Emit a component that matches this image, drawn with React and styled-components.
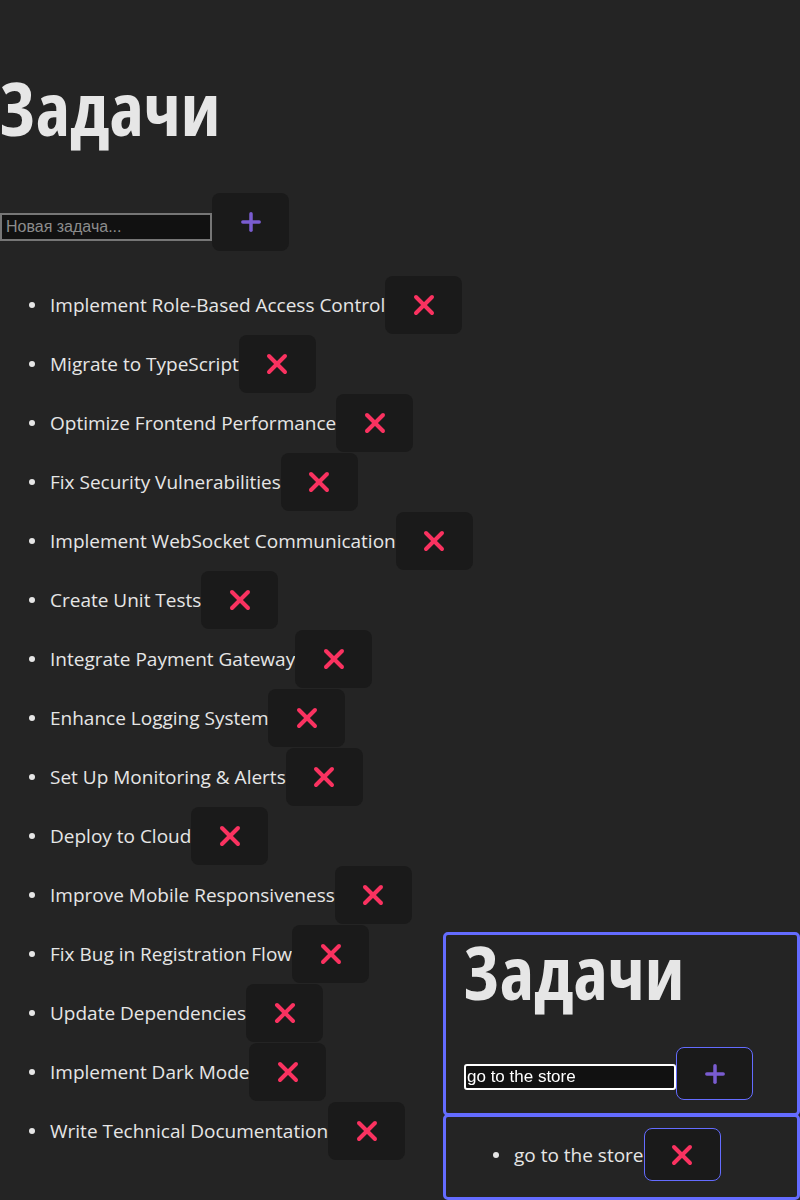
import React from 'react';
import styled, { createGlobalStyle } from 'styled-components';
import { Plus, X } from 'lucide-react';

const GlobalStyle = createGlobalStyle`
  html, body {
    margin: 0;
    padding: 0;
    background: #242424;
    color: rgba(255, 255, 255, 0.87);
    font-family: "Open Sans", "Noto Sans", sans-serif;
  }
`;

const Page = styled.div`
  box-sizing: border-box;
  height: 1200px;
  overflow: hidden;
  padding-top: 67px;
`;

const Title = styled.h1`
  margin: 0;
  font-family: "Open Sans", sans-serif;
  font-stretch: 80%;
  font-size: 74px;
  line-height: 1.1;
  font-weight: 700;
  color: #e6e6e6;
`;

const AddRow = styled.div`
  display: flex;
  align-items: flex-start;
  margin-top: ${p => p.$top}px;
`;

const TaskInput = styled.input`
  box-sizing: border-box;
  width: 212px;
  height: ${p => (p.$focused ? 26 : 28)}px;
  margin-top: ${p => p.$offset}px;
  padding: 1px ${p => (p.$focused ? 1 : 4)}px;
  background: #111111;
  border: 2px solid ${p => (p.$focused ? '#ffffff' : '#767676')};
  border-radius: ${p => (p.$focused ? 3 : 0)}px;
  color: #ffffff;
  font-family: "Liberation Sans", Arial, sans-serif;
  font-size: ${p => (p.$focused ? 17 : 16)}px;
  outline: none;

  &::placeholder {
    color: #8c8c8c;
  }
`;

const IconButton = styled.button`
  box-sizing: border-box;
  flex: none;
  display: flex;
  align-items: center;
  justify-content: center;
  width: 77px;
  height: ${p => p.$height || 58}px;
  padding: 0;
  background: #1a1a1a;
  border: 1px solid ${p => (p.$outlined ? '#646cff' : 'transparent')};
  border-radius: 8px;
  color: ${p => p.$color};
  cursor: pointer;
`;

const List = styled.ul`
  list-style: none;
  margin: 24px 0 0;
  padding: 0 0 0 29px;
`;

const Item = styled.li`
  display: flex;
  align-items: center;
  height: ${p => p.$height || 59}px;
`;

const Bullet = styled.span`
  flex: none;
  width: 6px;
  height: 6px;
  border-radius: 50%;
  background: #e6e6e6;
  margin-right: 15px;
`;

const ItemText = styled.span`
  font-size: 19px;
  color: #e6e6e6;
  white-space: nowrap;
`;

const Overlay = styled.div`
  position: fixed;
  left: 443px;
  top: 932px;
  width: 357px;
  display: flex;
  flex-direction: column;
`;

const Panel = styled.div`
  box-sizing: border-box;
  border: 3px solid #646cff;
  border-radius: 5px;
  background: #242424;
  height: ${p => p.$height}px;
  padding: ${p => p.$pad};
  margin-top: ${p => p.$overlap || 0}px;
`;

const PanelTitle = styled(Title)`
  margin-top: -4px;
`;

const tasks = [
  'Implement Role-Based Access Control',
  'Migrate to TypeScript',
  'Optimize Frontend Performance',
  'Fix Security Vulnerabilities',
  'Implement WebSocket Communication',
  'Create Unit Tests',
  'Integrate Payment Gateway',
  'Enhance Logging System',
  'Set Up Monitoring & Alerts',
  'Deploy to Cloud',
  'Improve Mobile Responsiveness',
  'Fix Bug in Registration Flow',
  'Update Dependencies',
  'Implement Dark Mode',
  'Write Technical Documentation',
];

function DeleteButton({ outlined, height }) {
  return (
    <IconButton $color="#fa3260" $outlined={outlined} $height={height}>
      <X size={32} strokeWidth={3} />
    </IconButton>
  );
}

function AddButton({ outlined, height }) {
  return (
    <IconButton $color="#7a5cd0" $outlined={outlined} $height={height}>
      <Plus size={28} strokeWidth={3} />
    </IconButton>
  );
}

export default function App() {
  return (
    <Page>
      <GlobalStyle />
      <Title>Задачи</Title>
      <AddRow $top={45}>
        <TaskInput $offset={20} placeholder="Новая задача..." />
        <AddButton />
      </AddRow>
      <List>
        {tasks.map(task => (
          <Item key={task}>
            <Bullet />
            <ItemText>{task}</ItemText>
            <DeleteButton />
          </Item>
        ))}
      </List>

      <Overlay>
        <Panel $height={184} $pad="0 0 0 18px">
          <PanelTitle>Задачи</PanelTitle>
          <AddRow $top={35}>
            <TaskInput $focused $offset={17} defaultValue="go to the store" />
            <AddButton outlined height={53} />
          </AddRow>
        </Panel>
        <Panel $height={86} $overlap={-2} $pad="11px 0 0 47px">
          <Item $height={53}>
            <Bullet />
            <ItemText>go to the store</ItemText>
            <DeleteButton outlined height={53} />
          </Item>
        </Panel>
      </Overlay>
    </Page>
  );
}
